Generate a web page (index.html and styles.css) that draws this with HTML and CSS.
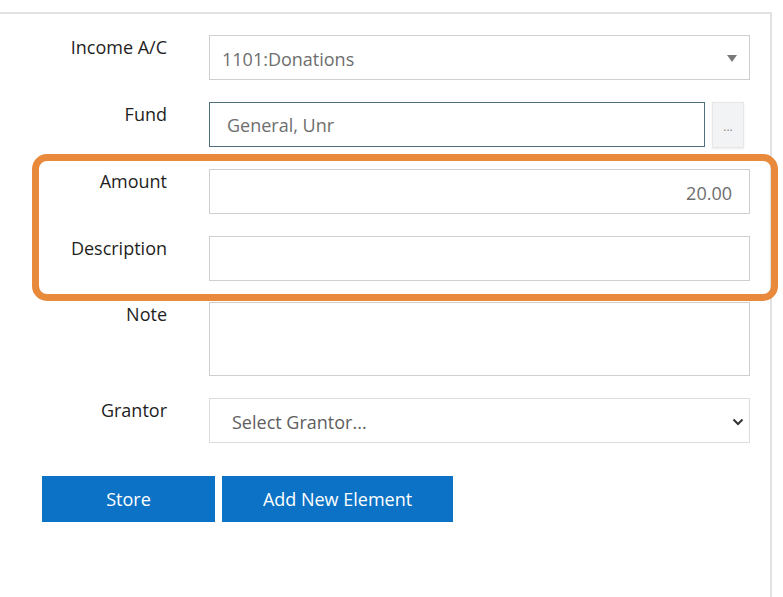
FILE: index.html
```html
<!DOCTYPE html>
<html>
<head>
<meta charset="utf-8">
<link rel="stylesheet" href="styles.css">
</head>
<body>
<div class="panel">
  <div class="form">
    <div class="label">Income A/C</div>
    <div class="control select">
      <span class="value">1101:Donations</span>
      <svg class="tri" width="10" height="7" viewBox="0 0 10 7"><path d="M0 0h10L5 7z" fill="#7a7a7a"/></svg>
    </div>

    <div class="label">Fund</div>
    <div class="fund">
      <div class="control focused"><span class="value">General, Unr</span></div>
      <div class="dots">...</div>
    </div>

    <div class="label">Amount</div>
    <div class="control amount"><span class="value">20.00</span></div>

    <div class="label">Description</div>
    <div class="control"></div>

    <div class="label">Note</div>
    <div class="control note"></div>

    <div class="label">Grantor</div>
    <div class="control grantor">
      <span class="value">Select Grantor...</span>
      <svg class="chev" width="12" height="8" viewBox="0 0 12 8"><path d="M1.5 1.5l4.5 4.5 4.5-4.5" fill="none" stroke="#333" stroke-width="2"/></svg>
    </div>
  </div>

  <div class="actions">
    <div class="btn store">Store</div>
    <div class="btn add">Add New Element</div>
  </div>

  <div class="highlight"></div>
</div>
</body>
</html>
```

FILE: styles.css
```css
html, body {
  margin: 0;
  padding: 0;
  background: #ffffff;
}

body {
  font-family: "Open Sans", "Noto Sans", sans-serif;
  color: #222;
}

.panel {
  position: relative;
  margin-top: 12px;
  width: 772px;
  height: 585px;
  box-sizing: border-box;
  border-top: 2px solid #e2e2e2;
  border-right: 2px solid #e2e2e2;
}

.form {
  display: grid;
  grid-template-columns: 167px 541px;
  column-gap: 42px;
  row-gap: 21.5px;
  padding-top: 21px;
}

.label {
  text-align: right;
  font-size: 18px;
  line-height: 24px;
  color: #1e1e1e;
}

.control {
  height: 45px;
  box-sizing: border-box;
  border: 1px solid #cfcfcf;
  display: flex;
  align-items: center;
  padding: 2px 12px 0 12px;
  font-size: 18px;
  color: #6e6e6e;
  background: #fff;
}

.select .value {
  flex: 1;
}

.fund {
  display: flex;
  gap: 7px;
}

.fund .control {
  width: 496px;
  padding-left: 17px;
}

.focused {
  border: 1px solid #4f6f7c;
}

.dots {
  width: 32px;
  height: 46px;
  box-sizing: border-box;
  background: #f2f3f4;
  border: 1px solid #e6e6e6;
  box-shadow: 0 1px 2px rgba(0,0,0,0.08);
  font-size: 12px;
  color: #888;
  display: flex;
  align-items: flex-end;
  justify-content: center;
  padding-bottom: 12px;
}

.amount {
  justify-content: flex-end;
  padding-right: 17px;
}

.note {
  height: 74px;
}

.grantor {
  border-color: #dcdcdc;
  padding-left: 22px;
  padding-right: 5px;
  padding-top: 4px;
  justify-content: space-between;
  color: #5e5e5e;
}

.actions {
  display: flex;
  gap: 7px;
  margin-top: 33px;
  padding-left: 42px;
}

.btn {
  height: 46px;
  background: #0b72c6;
  color: #fff;
  font-size: 18px;
  display: flex;
  align-items: center;
  justify-content: center;
}

.store {
  width: 173px;
}

.add {
  width: 231px;
}

.highlight {
  position: absolute;
  left: 32px;
  top: 140px;
  width: 746px;
  height: 147px;
  box-sizing: border-box;
  border: 7px solid #e8893b;
  border-radius: 15px;
  pointer-events: none;
}
```
